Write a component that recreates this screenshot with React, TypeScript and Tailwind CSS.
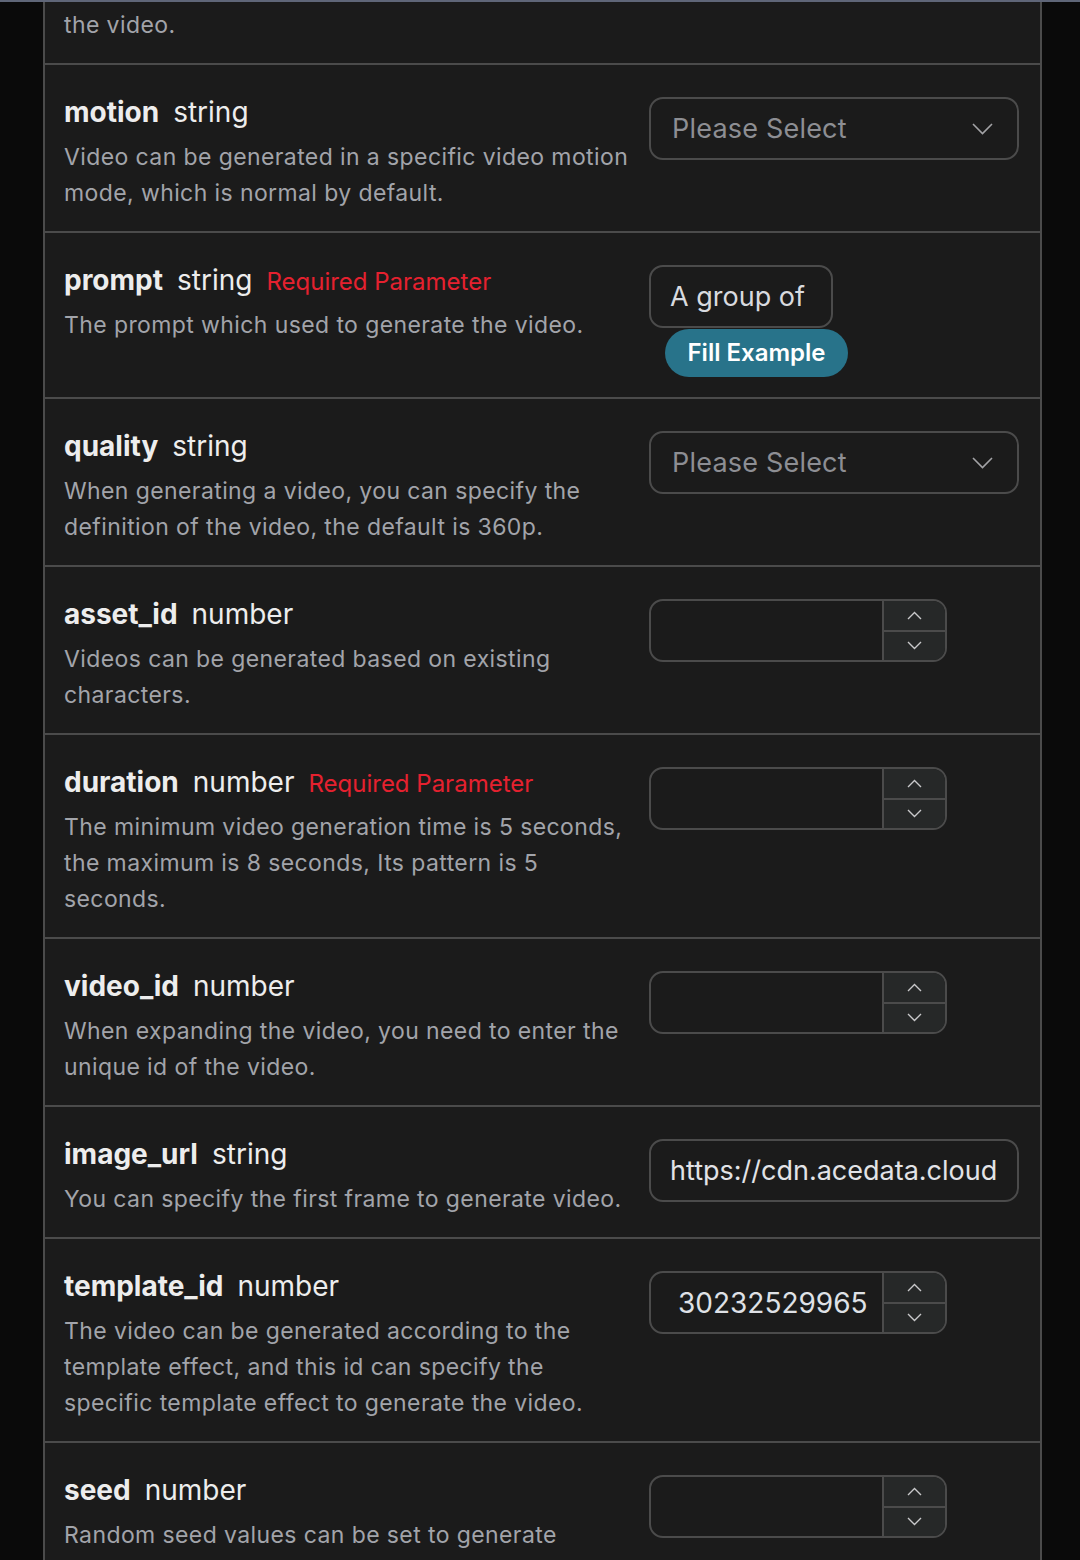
import React from "react";

type Control =
  | { kind: "select" }
  | { kind: "prompt" }
  | { kind: "number"; value?: string }
  | { kind: "text"; value: string };

type Row = {
  name: string;
  type: string;
  required?: boolean;
  desc: string[];
  control: Control;
};

const rows: Row[] = [
  {
    name: "motion",
    type: "string",
    desc: ["Video can be generated in a specific video motion", "mode, which is normal by default."],
    control: { kind: "select" },
  },
  {
    name: "prompt",
    type: "string",
    required: true,
    desc: ["The prompt which used to generate the video."],
    control: { kind: "prompt" },
  },
  {
    name: "quality",
    type: "string",
    desc: ["When generating a video, you can specify the", "definition of the video, the default is 360p."],
    control: { kind: "select" },
  },
  {
    name: "asset_id",
    type: "number",
    desc: ["Videos can be generated based on existing", "characters."],
    control: { kind: "number" },
  },
  {
    name: "duration",
    type: "number",
    required: true,
    desc: [
      "The minimum video generation time is 5 seconds,",
      "the maximum is 8 seconds, Its pattern is 5",
      "seconds.",
    ],
    control: { kind: "number" },
  },
  {
    name: "video_id",
    type: "number",
    desc: ["When expanding the video, you need to enter the", "unique id of the video."],
    control: { kind: "number" },
  },
  {
    name: "image_url",
    type: "string",
    desc: ["You can specify the first frame to generate video."],
    control: { kind: "text", value: "https://cdn.acedata.cloud" },
  },
  {
    name: "template_id",
    type: "number",
    desc: [
      "The video can be generated according to the",
      "template effect, and this id can specify the",
      "specific template effect to generate the video.",
    ],
    control: { kind: "number", value: "30232529965" },
  },
  {
    name: "seed",
    type: "number",
    desc: [
      "Random seed values can be set to generate",
      "videos with the same effect by the same seed.",
    ],
    control: { kind: "number" },
  },
];

function SelectBox() {
  return (
    <div className="flex h-[63px] w-full items-center justify-between rounded-[14px] border-2 border-[#4b4b4b] bg-[#1b1b1b] pl-[21px] pr-[24px]">
      <span className="text-[27px] leading-none tracking-[0.2px] text-[#8d8e93]">Please Select</span>
      <svg width="21" height="12" viewBox="0 0 21 12" fill="none">
        <polyline points="1,1 10.5,10.5 20,1" stroke="#a3a3a6" strokeWidth="1.6" />
      </svg>
    </div>
  );
}

function NumberBox({ value }: { value?: string }) {
  return (
    <div className="flex h-[63px] w-[298px] overflow-hidden rounded-[14px] border-2 border-[#4b4b4b] bg-[#1b1b1b]">
      <div className="flex flex-1 items-center pl-[27px] text-[28px] leading-none text-[#dfe1e6]">{value}</div>
      <div className="flex w-[63px] flex-col border-l-2 border-[#4b4b4b] bg-[#262828]">
        <div className="flex flex-1 items-center justify-center border-b-2 border-[#4b4b4b]">
          <svg width="15" height="9" viewBox="0 0 15 9" fill="none">
            <polyline points="1,8 7.5,1.5 14,8" stroke="#c9c9cb" strokeWidth="1.4" />
          </svg>
        </div>
        <div className="flex flex-1 items-center justify-center">
          <svg width="15" height="9" viewBox="0 0 15 9" fill="none">
            <polyline points="1,1 7.5,7.5 14,1" stroke="#c9c9cb" strokeWidth="1.4" />
          </svg>
        </div>
      </div>
    </div>
  );
}

function ControlView({ c }: { c: Control }) {
  if (c.kind === "select") return <SelectBox />;
  if (c.kind === "number") return <NumberBox value={c.value} />;
  if (c.kind === "text")
    return (
      <div className="flex h-[63px] w-full items-center rounded-[14px] border-2 border-[#4b4b4b] bg-[#1b1b1b] pl-[19px] text-[27px] leading-none text-[#e2e3e7]">
        {c.value}
      </div>
    );
  return (
    <div className="flex flex-col items-start">
      <div className="flex h-[63px] w-[184px] items-center rounded-[14px] border-2 border-[#4b4b4b] bg-[#1b1b1b] pl-[19px] text-[27px] leading-none text-[#d8dadf]">
        A group of
      </div>
      <button className="ml-[16px] mt-[1px] flex h-[48px] w-[183px] items-center justify-center rounded-full bg-[#28738a] text-[24px] font-semibold leading-none text-white">
        Fill Example
      </button>
    </div>
  );
}

function ParamRow({ row }: { row: Row }) {
  return (
    <div className="flex gap-[20px] border-b-2 border-[#4b4b4b] pb-5 pl-[19px] pr-[21px] pt-[29px]">
      <div className="flex-1">
        <div className="flex h-[36px] items-baseline overflow-visible whitespace-nowrap text-[28px] leading-[36px]">
          <span className="font-bold text-[#ededed]">{row.name}</span>
          <span className="ml-[14px] text-[#ededed]">{row.type}</span>
          {row.required && (
            <span className="ml-[14px] text-[24px] leading-[24px] text-[#e5212f]">Required Parameter</span>
          )}
        </div>
        <div className="mt-[9px] text-[23px] leading-[36px] tracking-[0.4px] text-[#a2a4aa]">
          {row.desc.map((l, i) => (
            <div key={i} className="whitespace-nowrap">
              {l}
            </div>
          ))}
        </div>
      </div>
      <div className="mt-[3px] w-[370px] shrink-0">
        <ControlView c={row.control} />
      </div>
    </div>
  );
}

export default function App() {
  return (
    <div
      className="flex h-[1560px] w-[1080px] flex-col overflow-hidden bg-[#0a0a0a]"
      style={{ fontFamily: "Inter, 'Noto Sans', sans-serif" }}
    >
      <div className="h-[2px] w-full shrink-0 bg-[#5f6678]" />
      <div className="ml-[43px] flex w-[999px] flex-1 flex-col border-x-2 border-[#4b4b4b] bg-[#1b1b1b]">
        <div className="flex h-[63px] shrink-0 items-end overflow-hidden border-b-2 border-[#4b4b4b] pb-5 pl-[19px]">
          <div className="text-[23px] leading-[36px] tracking-[0.4px] text-[#a2a4aa]">
            <div className="whitespace-nowrap">When extending the video, you need to specify (required) the id of</div>
            <div className="whitespace-nowrap">the video.</div>
          </div>
        </div>
        {rows.map((r) => (
          <ParamRow key={r.name} row={r} />
        ))}
      </div>
    </div>
  );
}
